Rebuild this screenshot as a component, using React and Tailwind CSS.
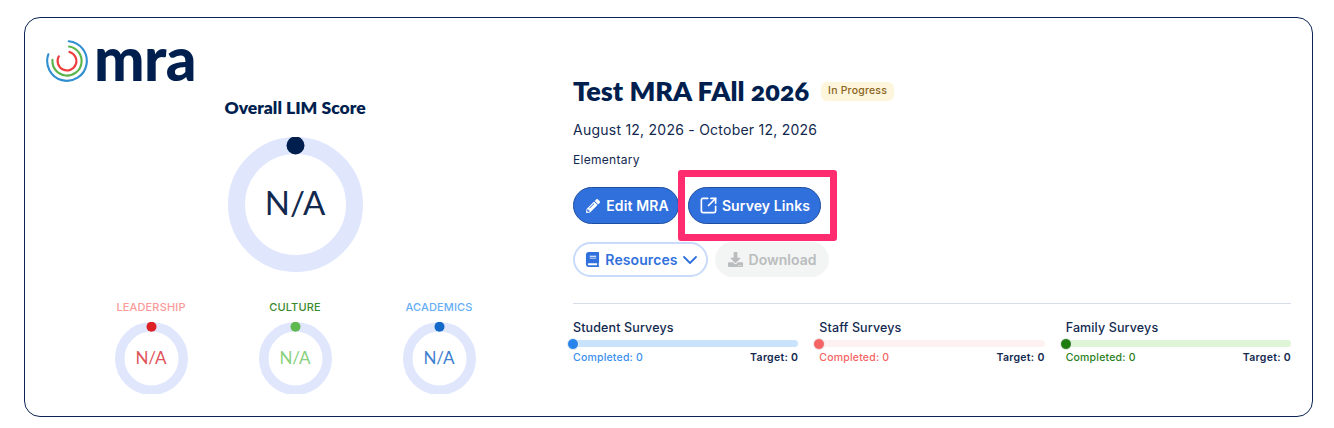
import React from "react";
import { FaPencilAlt, FaBook, FaDownload } from "react-icons/fa";
import { ChevronDown, SquareArrowOutUpRight } from "lucide-react";

function arc(cx, cy, r, fromDeg, toDeg) {
  const p = (d) => {
    const a = ((d - 90) * Math.PI) / 180;
    return `${(cx + r * Math.cos(a)).toFixed(2)} ${(cy + r * Math.sin(a)).toFixed(2)}`;
  };
  const large = toDeg - fromDeg > 180 ? 1 : 0;
  return `M${p(fromDeg)} A${r} ${r} 0 ${large} 1 ${p(toDeg)}`;
}

function Logo() {
  return (
    <div className="flex items-center h-[42px]">
      <svg width="42" height="42" viewBox="0 0 42 42" className="shrink-0">
        <path d={arc(21, 21, 19.8, 5, 290)} fill="none" stroke="#2f8fd0" strokeWidth="2.1" strokeLinecap="round" />
        <path d={arc(21, 21, 14.6, 8, 275)} fill="none" stroke="#5ab54b" strokeWidth="2.1" strokeLinecap="round" />
        <path d={arc(21, 21, 9.4, 15, 300)} fill="none" stroke="#ee3a3a" strokeWidth="2.1" strokeLinecap="round" />
      </svg>
      <span className="ml-[6px] font-['Lato',sans-serif] font-black text-[60px] leading-none text-[#001f4f] tracking-[-0.5px] mt-[-6px]">mra</span>
    </div>
  );
}

function Donut({ size, stroke, dot, ring, dotColor, textClass }) {
  const r = (size - stroke) / 2;
  return (
    <div className="grid place-items-center" style={{ width: size, height: size }}>
      <svg width={size} height={size} viewBox={`0 0 ${size} ${size}`} className="col-start-1 row-start-1">
        <circle cx={size / 2} cy={size / 2} r={r} fill="none" stroke={ring} strokeWidth={stroke} />
        <circle cx={size / 2} cy={stroke / 2} r={dot} fill={dotColor} />
      </svg>
      <span className={`col-start-1 row-start-1 font-['Lato',sans-serif] ${textClass}`}>N/A</span>
    </div>
  );
}

function SubScore({ label, labelClass, dotColor, textClass }) {
  return (
    <div className="w-[144px] flex flex-col items-center">
      <div className={`font-['Inter',sans-serif] font-medium text-[11px] leading-[14px] uppercase tracking-[0.15px] ${labelClass}`}>{label}</div>
      <div className="mt-[8px] h-[72px] overflow-hidden">
        <Donut size={73} stroke={9.5} dot={5} ring="#e0e7fd" dotColor={dotColor} textClass={textClass} />
      </div>
    </div>
  );
}

function Survey({ title, track, knob, completedClass }) {
  return (
    <div className="flex-1 min-w-0">
      <div className="text-[12.5px] leading-[16px] font-medium tracking-[0.13px] text-[#12294f]">{title}</div>
      <div className={`mt-[4px] h-[7px] rounded-full flex items-center ${track}`}>
        <span className={`block w-[12px] h-[12px] rounded-full border border-[#eef0f2] ml-[-6px] ${knob}`} />
      </div>
      <div className="mt-[4px] flex justify-between items-baseline leading-[14px] font-medium">
        <span className={`text-[10.5px] tracking-[0.2px] ${completedClass}`}>Completed: 0</span>
        <span className="text-[10.5px] font-semibold tracking-[0.3px] text-[#12294f]">Target: 0</span>
      </div>
    </div>
  );
}

export default function App() {
  return (
    <div className="w-[1334px] h-[428px] bg-white pt-[17px] pl-[24px] font-['Inter',sans-serif]">
      <div className="w-[1289px] h-[400px] border border-[#0b2454] rounded-[16px] flex pl-[21px] pr-[21px] pt-[22px]">
        <div className="w-[498px] shrink-0 flex flex-col">
          <Logo />
          <div className="mt-[15px] text-center font-['Lato',sans-serif] font-extrabold text-[17.5px] leading-[22px] text-[#001f4f]">Overall LIM Score</div>
          <div className="mt-[18px] flex justify-center">
            <Donut size={135} stroke={17} dot={9} ring="#e0e7fd" dotColor="#001f4f" textClass="text-[33px] text-[#12294f] mt-[-4px]" />
          </div>
          <div className="mt-[28px] flex justify-center">
            <SubScore label="Leadership" labelClass="text-[#fb9a9a]" dotColor="#dc2026" textClass="text-[17px] text-[#e0525a] mt-[-2px]" />
            <SubScore label="Culture" labelClass="text-[#3b8a2c]" dotColor="#5fb94e" textClass="text-[17px] text-[#88d07c] mt-[-2px]" />
            <SubScore label="Academics" labelClass="text-[#66aef5]" dotColor="#1168c8" textClass="text-[17px] text-[#3c80cf] mt-[-2px]" />
          </div>
        </div>

        <div className="ml-[29px] flex-1 min-w-0 flex flex-col">
          <div className="mt-[33px] flex items-center h-[36px]">
            <span className="font-['Lato',sans-serif] font-extrabold text-[27px] leading-[36px] text-[#001f4f] oldstyle-nums">Test MRA FAll 2026</span>
            <span className="ml-[12px] h-[19px] w-[73px] rounded-[6px] bg-[#fdf5dc] text-[#8a6420] text-[10.5px] font-medium tracking-[0.2px] flex items-center justify-center">In Progress</span>
          </div>
          <div className="mt-[11px] text-[14px] leading-[20px] tracking-[0.24px] text-[#12294f]">August 12, 2026 - October 12, 2026</div>
          <div className="mt-[12px] text-[12px] leading-[16px] tracking-[0.3px] text-[#12294f]">Elementary</div>

          <div className="mt-[19px] flex">
            <button className="w-[106px] h-[37px] pl-[3px] rounded-full bg-[#3070dc] border border-[#1e4f9f] text-white text-[14px] font-semibold tracking-[0.1px] flex items-center justify-center gap-[6px]">
              <FaPencilAlt className="w-[14px] h-[14px]" />
              Edit MRA
            </button>
            <div className="relative ml-[9px]">
              <button className="w-[133px] h-[37px] rounded-full bg-[#3070dc] border border-[#1e4f9f] text-white text-[14px] font-semibold tracking-[0.1px] flex items-center justify-center gap-[4px]">
                <SquareArrowOutUpRight className="w-[19px] h-[19px]" strokeWidth={2.1} />
                Survey Links
              </button>
              <div className="absolute left-[-10px] top-[-17px] w-[159px] h-[71px] border-[7px] border-[#ff2d6f] rounded-[3px]" />
            </div>
          </div>

          <div className="mt-[18px] flex">
            <button className="w-[135px] h-[35px] pl-[1px] rounded-full bg-white border-2 border-[#c8dbfa] text-[#3070dc] text-[14px] font-semibold tracking-[0.1px] flex items-center justify-center gap-[5px]">
              <FaBook className="w-[15px] h-[15px]" />
              Resources
              <ChevronDown className="w-[24px] h-[24px] mx-[-5px] mt-[1px]" strokeWidth={1.8} />
            </button>
            <button className="ml-[7px] w-[114px] h-[35px] rounded-full bg-[#f3f4f4] text-[#b9bdbd] text-[14px] font-semibold flex items-center justify-center gap-[6px]">
              <FaDownload className="w-[15px] h-[15px]" />
              Download
            </button>
          </div>

          <div className="mt-[26px] border-t border-[#d5dde8]" />

          <div className="mt-[16px] flex gap-[21px]">
            <Survey title="Student Surveys" track="bg-[#c9e3fc]" knob="bg-[#2684ec]" completedClass="text-[#3a90ee]" />
            <Survey title="Staff Surveys" track="bg-[#fef1f1]" knob="bg-[#f56464]" completedClass="text-[#f56464]" />
            <Survey title="Family Surveys" track="bg-[#def5d7]" knob="bg-[#1d7d0f]" completedClass="text-[#2a7f1c]" />
          </div>
        </div>
      </div>
    </div>
  );
}
